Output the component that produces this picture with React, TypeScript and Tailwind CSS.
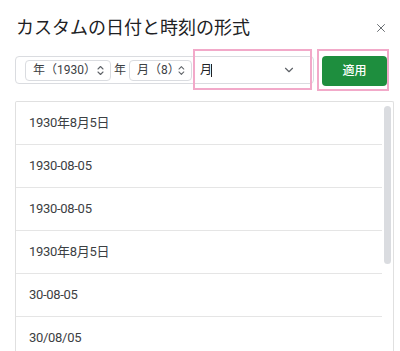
import { ChevronDown, X } from "lucide-react";

const rows = [
  "1930年8月5日",
  "1930-08-05",
  "1930-08-05",
  "1930年8月5日",
  "30-08-05",
  "30/08/05",
];

function UpDown() {
  return (
    <svg width="7" height="11" viewBox="0 0 7 11" fill="none" className="text-[#5f6368]">
      <path d="M1 4L3.5 1.5L6 4" stroke="currentColor" strokeWidth="1.1" strokeLinecap="round" strokeLinejoin="round" />
      <path d="M1 7L3.5 9.5L6 7" stroke="currentColor" strokeWidth="1.1" strokeLinecap="round" strokeLinejoin="round" />
    </svg>
  );
}

function Chip({ label, width }: { label: string; width: string }) {
  return (
    <div
      className={`flex h-[21px] items-center justify-between rounded-[4px] border border-[#dadce0] pl-[7px] pr-[6px] ${width}`}
    >
      <span className="text-[12px] text-[#3c4043]">{label}</span>
      <UpDown />
    </div>
  );
}

export default function App() {
  return (
    <div
      className="relative h-[351px] w-[400px] overflow-hidden bg-white"
      style={{ fontFamily: 'Roboto, "Noto Sans CJK JP", sans-serif' }}
    >
      {/* header */}
      <div className="flex h-[56px] items-start justify-between pl-[16px] pr-[12px] pt-[16px]">
        <h1 className="text-[18px] leading-[24px] text-[#202124]">カスタムの日付と時刻の形式</h1>
        <X size={14} strokeWidth={1.6} className="mt-[5px] text-[#5f6368]" />
      </div>

      {/* controls */}
      <div className="relative flex h-[28px] items-center pl-[15px]">
        <div className="flex h-[28px] w-[299px] items-center rounded-[4px] border border-[#dadce0] pl-[9px]">
          <Chip label="年（1930）" width="w-[86px]" />
          <span className="px-[3px] text-[12px] text-[#3c4043]">年</span>
          <Chip label="月（8）" width="w-[63px]" />
          <div className="flex flex-1 items-center justify-between pl-[8px] pr-[17px]">
            <div className="flex items-center">
              <span className="text-[12px] text-[#202124]">月</span>
              <span className="ml-[-1px] h-[13px] w-px bg-[#202124]" />
            </div>
            <ChevronDown size={14} strokeWidth={2} className="text-[#5f6368]" />
          </div>
        </div>
        <button className="ml-[8px] mt-[2px] flex h-[30px] w-[65px] items-center justify-center rounded-[4px] bg-[#1e8e3e] text-[12px] font-medium text-white">
          適用
        </button>

        {/* highlight overlays */}
        <div className="pointer-events-none absolute left-[193px] top-[-7px] h-[41px] w-[119px] border-[2.5px] border-[#f2a9c9]" />
        <div className="pointer-events-none absolute left-[317px] top-[-7px] h-[42px] w-[72px] border-[2.5px] border-[#f2a9c9]" />
      </div>

      {/* list */}
      <div className="ml-[15px] mr-[6px] mt-[17px] flex rounded-t-[2px] border border-b-0 border-[#e0e0e0]">
        <div className="w-[366px]">
          {rows.map((r, i) => (
            <div
              key={i}
              className="flex h-[43px] items-center border-b border-[#e5e5e5] pl-[13px] text-[13px] tracking-[-0.3px] text-[#3c4043]"
            >
              {r}
            </div>
          ))}
        </div>
        <div className="flex flex-1 justify-center pt-[4px]">
          <div className="h-[158px] w-[7px] rounded-full bg-[#dadce0]" />
        </div>
      </div>
    </div>
  );
}
